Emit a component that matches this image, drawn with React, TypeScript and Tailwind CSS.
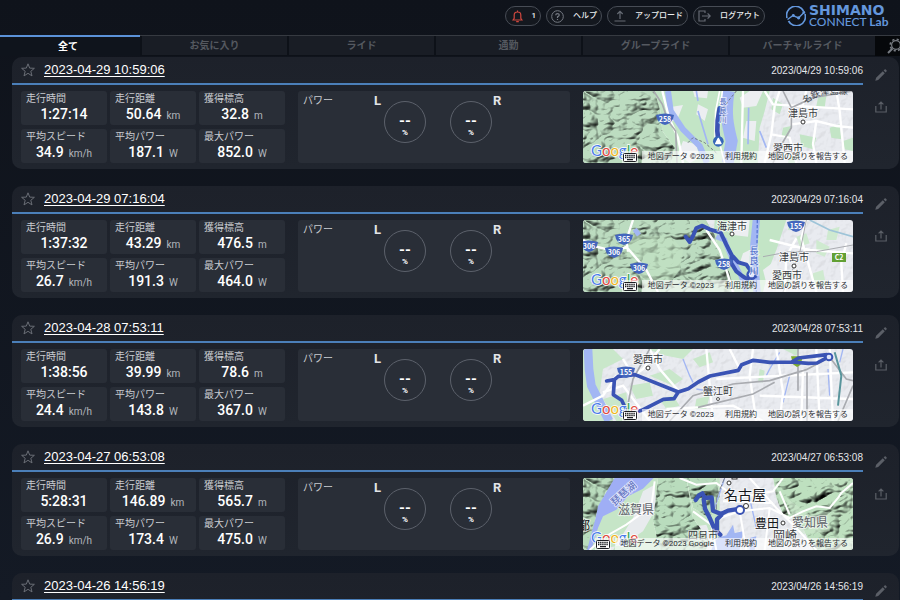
import React from "react";
import type { ReactNode } from "react";

const SANS = "font-['Liberation_Sans','Noto_Sans_CJK_JP',sans-serif]";
const ROBOTO = "font-['Roboto','Noto_Sans_CJK_JP',sans-serif]";

type Label = { x: number; y: number; text: string; size?: number; color?: string; rotate?: number };
type MapData = {
  name: string;
  shapes: ReactNode;
  labels: Label[];
  shields: [number, number, string][];
  extra?: ReactNode;
  wideCredit?: boolean;
};
type Stats = { time: string; distance: string; climb: string; speed: string; power: string; maxPower: string };
type Activity = { title: string; date: string; stats?: Stats; map?: MapData };

const ROUTE = { fill: "none", stroke: "#3a53b4", strokeWidth: 12, strokeLinejoin: "round", strokeLinecap: "round" } as const;
const WATER = { fill: "none", stroke: "#a2b6f3" } as const;
const ROAD = { fill: "none", stroke: "#ffffff", strokeWidth: 7 } as const;
const RAIL = { fill: "none", stroke: "#a9abb0", strokeWidth: 5 } as const;
const GREEN = "#c3e5c6";

function MapBase() {
  return <rect width="810" height="216" fill="#e9ebf0" filter="url(#relief-soft)" />;
}

const map1: MapData = {
  name: "津島市周辺",
  shapes: (
    <>
      <MapBase />
      <path d="M200 0H560L545 60 530 110 525 216H230Z" fill={GREEN} />
      <path d="M250 50 300 42 285 80 262 95ZM330 0 375 0 372 22 335 18ZM345 40 375 55 365 90 340 70ZM300 150 340 160 350 200 320 216 285 190ZM470 20 500 0 540 0 520 45 480 50ZM490 90 520 90 515 150 480 140Z" fill="#eceef1" />
      <path d="M570 20 600 40 590 70 565 55ZM650 130 700 140 690 175 655 165ZM620 195 650 190 640 216H615ZM740 110 770 100 775 145 745 140ZM705 20 730 15 725 50 700 45ZM780 150 810 140V180L785 175ZM600 110 625 105 615 140 595 140Z" fill={GREEN} />
      <path d="M0 0H215L232 60 238 120 275 170 265 216H0Z" fill="#bcdcc0" filter="url(#relief)" />
      <path d="M255 0 263 60 300 115 350 165 372 216" {...WATER} strokeWidth="18" />
      <path d="M345 60 360 110 375 160M340 0 345 30M497 50 495 160M530 120 550 170" {...WATER} strokeWidth="5" />
      <path d="M437 0C425 70 436 110 446 150L434 216" {...WATER} strokeWidth="36" />
      <path d="M418 0 410 70 408 150 425 216M410 0 398 60 396 140" {...ROAD} strokeWidth="5" />
      <path d="M238 0 258 80 285 140 300 216M480 0 475 216M545 0 570 40 810 55M575 45 565 130 545 216M590 0 575 45M620 60 625 100 700 90 760 105 810 110M670 0 655 60M760 0 770 60 785 216M700 90 690 160 700 216M565 130 620 140 640 216" {...ROAD} />
      <path d="M212 0 238 40 255 90 278 120 282 216M600 0 625 50 625 110 590 170 570 216M625 50 690 20 810 0" {...RAIL} />
      <path d="M315 155 330 140 365 155 405 190M460 0 420 50 425 100" fill="none" stroke="#6e7480" strokeWidth="3" strokeDasharray="8 6" />
      <path d="M410 52 404 88 403 120 406 150" {...ROUTE} strokeWidth="14" />
      <circle cx="406" cy="151" r="16" fill="#3566b8" />
      <path d="M406 142 414 158H398Z" fill="#fff" stroke="#fff" strokeWidth="4" strokeLinejoin="round" />
    </>
  ),
  labels: [
    { x: 220, y: 26, text: "津島市" },
    { x: 205, y: 61, text: "愛西市" },
    { x: 140, y: 13, text: "長", size: 7, color: "#4f6ac0" },
    { x: 140, y: 22, text: "良", size: 7, color: "#4f6ac0" },
    { x: 140, y: 31, text: "川", size: 7, color: "#4f6ac0" },
  ],
  shields: [[82, 28, "258"]],
  extra: (
    <>
      <circle cx="220" cy="31" r="2" fill="#fff" stroke="#333" />
      <path id="rail-name" d="M222 13Q236 3 248 3T272 3" fill="none" />
      <text fontSize="9" fill="#42464d">
        <textPath href="#rail-name">名鉄津島線</textPath>
      </text>
    </>
  ),
};

const map2: MapData = {
  name: "海津市周辺",
  shapes: (
    <>
      <MapBase />
      <path d="M395 0H610L580 90 560 140 540 216H380Z" fill={GREEN} />
      <path d="M440 0 500 0 495 50 450 45ZM480 100 500 90 500 140 470 130ZM540 150 580 120 590 180 550 190Z" fill="#eceef1" />
      <path d="M640 50 670 40 680 70 650 80ZM735 30 770 20 760 60 730 60ZM590 150 630 160 620 200H590ZM700 60 740 80 725 110 700 100ZM690 160 720 150 730 200H690ZM620 0H650L640 30H615Z" fill="#cfead0" />
      <path d="M0 0H370L395 45 410 95 440 160 455 216H0Z" fill="#bcdcc0" filter="url(#relief)" />
      <path d="M130 30 180 50 260 45 300 90 290 150 240 216H190L150 120 120 95Z" fill="#c2e3c3" opacity=".55" />
      <path d="M155 28 168 45M400 50 425 60 440 100 475 170 490 216" {...WATER} strokeWidth="15" />
      <path d="M520 0 512 80 522 216" {...WATER} strokeWidth="22" />
      <path d="M523 0 520 216" fill="none" stroke="#5877d4" strokeWidth="4" strokeDasharray="10 5" />
      <path d="M0 60 40 80 100 95 130 80 190 150 225 216M135 95 130 60 150 0M370 30 410 90 430 150 450 216M640 55 610 110 605 216M790 70 775 130 780 216M560 60 680 90 810 100M670 0 655 55 700 216" {...ROAD} />
      <path d="M540 110 620 95 700 95 810 75M600 216 650 100 670 0" {...RAIL} strokeWidth="3" />
      <path d="M680 0 740 30 810 50" fill="none" stroke="#9ec4d8" strokeWidth="5" />
      <path d="M308 50 320 66 330 48 340 24 358 17 380 28 413 38 430 74 446 105 466 127 490 134 505 155M446 108 444 128 460 154 478 168 494 178" {...ROUTE} />
      <circle cx="506" cy="164" r="12" fill="#dfe6fa" stroke="#3a53b4" strokeWidth="8" />
    </>
  ),
  labels: [
    { x: 149, y: 10, text: "海津市" },
    { x: 211, y: 41, text: "津島市" },
    { x: 204, y: 59, text: "愛西市" },
    { x: 171, y: 34, text: "長", size: 9, color: "#3f62c4" },
    { x: 171, y: 44, text: "良", size: 9, color: "#3f62c4" },
    { x: 171, y: 54, text: "川", size: 9, color: "#3f62c4" },
  ],
  shields: [[6, 26, "306"], [41, 19, "365"], [31, 32, "306"], [56, 48, "306"], [141, 44, "258"], [213, 6, "155"]],
  extra: (
    <>
      <circle cx="149" cy="14" r="2" fill="#fff" stroke="#333" />
      <circle cx="211" cy="46" r="2" fill="#fff" stroke="#333" />
      <rect x="249" y="33" width="14" height="9" fill="#62a034" />
      <text x="256" y="40" textAnchor="middle" fontSize="7" fontWeight="700" fill="#fff">C2</text>
    </>
  ),
};

const map3: MapData = {
  name: "蟹江町周辺",
  shapes: (
    <>
      <MapBase />
      <path d="M0 0H90L120 30 60 60 50 130 90 216H0ZM190 0H330L300 30 250 20ZM200 80 260 60 300 90 270 110ZM230 150 270 140 290 170 250 180ZM330 30 380 10 390 40 350 55ZM140 110 200 100 210 140 160 150ZM340 150 380 140 370 180H335ZM600 0 650 0 640 20ZM530 60 545 65 540 100H525ZM60 150 130 130 140 216H100Z" fill="#c9e7ca" />
      <path d="M15 0 18 60 25 110 45 150 78 216" {...WATER} strokeWidth="26" />
      <path d="M300 30 320 80 330 100M590 10 560 60 550 80M340 120 400 130M620 80 600 160M735 60 740 140M780 0 770 40" {...WATER} strokeWidth="4" />
      <path d="M120 30 150 80 180 60 230 0M60 130 120 110 200 216M200 0 230 60 290 130M370 0 390 216M510 0 500 80 520 216M580 0 600 130 590 216M700 0 710 216M400 90 810 70M530 140 810 150M250 180 450 170 540 216M440 0 470 60M660 60 655 216M740 0 750 216M0 170 60 140 100 80" {...ROAD} />
      <path d="M200 0 150 90 125 216M260 216 330 140 450 105 560 95 670 62 740 25M345 175 510 135 575 100M645 0V125M672 70V216M740 25 790 90 810 95M765 216 810 110" {...RAIL} />
      <path d="M755 10 775 80 765 170" fill="none" stroke="#59959c" strokeWidth="6" />
      <path d="M624 22H660L652 48 642 54 630 46Z" fill="#7dac2b" />
      <path d="M71 96 94 92 106 82 156 77 286 129 273 149 241 151 176 184 136 196 116 154 91 137 94 94M286 129 316 119 346 99 381 81 466 64 476 47 511 34 560 40 626 39 646 27 732 17M626 39 676 43 702 42 728 28" {...ROUTE} strokeWidth="11" />
      <circle cx="738" cy="24" r="10" fill="#dfe6fa" stroke="#3a53b4" strokeWidth="6" />
    </>
  ),
  labels: [
    { x: 65, y: 14, text: "愛西市" },
    { x: 135, y: 46, text: "蟹江町" },
  ],
  shields: [[43, 23, "155"]],
  extra: (
    <>
      <circle cx="65" cy="19" r="2" fill="#fff" stroke="#333" />
      <circle cx="135" cy="50" r="1.5" fill="#fff" stroke="#555" />
    </>
  ),
};

const map4: MapData = {
  name: "名古屋周辺",
  wideCredit: true,
  shapes: (
    <>
      <MapBase />
      <rect width="410" height="216" fill="#c6e5c7" />
      <path d="M180 40 215 20 220 90 180 160 120 200 40 216H90L150 120ZM300 150 370 140 400 216H300Z" fill="#e8ebee" />
      <path d="M0 0H110L70 40 40 110 20 216H0ZM225 0H310L320 60 330 120 380 190 370 216H230L210 130ZM310 0H400L410 60 380 120 330 90Z" fill="#b9dcbd" filter="url(#relief)" />
      <path d="M570 0H810V216H690L650 130 600 110 580 60Z" fill="#bee0bf" filter="url(#relief)" />
      <path d="M610 60 680 110 740 100 740 160 650 170Z" fill="#cde8cd" opacity=".6" />
      <path d="M95 0H212L180 32 135 55 100 95 60 115 45 150 25 216H12L38 120 45 85Z" fill="#9faef5" />
      <path d="M385 216 400 180 430 172 450 140 455 165 480 160 470 216ZM500 180 520 175 515 216H500Z" fill="#a2b6f3" />
      <path d="M395 90 425 0M500 60 520 150" {...WATER} strokeWidth="4" />
      <path d="M215 10 205 85 130 140 60 180 20 216M290 0 340 20 400 15 460 60 570 40 600 0M330 100 385 140 400 216M410 120 470 100 560 90 620 120 660 100 700 85 740 90 765 60 775 45 810 15M470 100 490 216M560 90 545 216M500 0 580 90 640 150 700 216M420 70 570 75M590 40 620 110" {...ROAD} strokeWidth="6" />
      <path d="M425 0 400 60 400 100" fill="none" stroke="#7b828c" strokeWidth="3" strokeDasharray="16 5" />
      <path d="M338 66 348 52 358 46 366 60 386 58 390 98 414 108 435 98 458 94M362 64 366 92 382 124 394 152 412 170M402 164 402 124 416 110" {...ROUTE} strokeWidth="13" />
      <circle cx="471" cy="96" r="12" fill="#fff" stroke="#3a53b4" strokeWidth="6" />
    </>
  ),
  labels: [
    { x: 43, y: 18, text: "琵琶湖", color: "#5466b8", rotate: -42 },
    { x: 53, y: 36, text: "滋賀県", size: 12, color: "#5d6168" },
    { x: 162, y: 22, text: "名古屋", size: 14, color: "#15171b" },
    { x: 184, y: 50, text: "豊田", size: 12, color: "#15171b" },
    { x: 227, y: 49, text: "愛知県", size: 12, color: "#5d6168" },
    { x: 120, y: 61, text: "四日市" },
    { x: 202, y: 62, text: "岡崎", size: 12 },
    { x: 1, y: 52, text: "都", size: 12, color: "#15171b" },
  ],
  shields: [],
  extra: (
    <>
      <circle cx="163" cy="28" r="2.5" fill="#fff" stroke="#333" />
      <circle cx="146" cy="5" r="2" fill="#fff" stroke="#333" />
      <circle cx="200" cy="45" r="2" fill="#fff" stroke="#333" />
      <rect x="149" y="-3" width="5" height="4" fill="#fff" stroke="#333" />
    </>
  ),
};

const activities: Activity[] = [
  { title: "2023-04-29 10:59:06", date: "2023/04/29 10:59:06", map: map1, stats: { time: "1:27:14", distance: "50.64", climb: "32.8", speed: "34.9", power: "187.1", maxPower: "852.0" } },
  { title: "2023-04-29 07:16:04", date: "2023/04/29 07:16:04", map: map2, stats: { time: "1:37:32", distance: "43.29", climb: "476.5", speed: "26.7", power: "191.3", maxPower: "464.0" } },
  { title: "2023-04-28 07:53:11", date: "2023/04/28 07:53:11", map: map3, stats: { time: "1:38:56", distance: "39.99", climb: "78.6", speed: "24.4", power: "143.8", maxPower: "367.0" } },
  { title: "2023-04-27 06:53:08", date: "2023/04/27 06:53:08", map: map4, stats: { time: "5:28:31", distance: "146.89", climb: "565.7", speed: "26.9", power: "173.4", maxPower: "475.0" } },
  { title: "2023-04-26 14:56:19", date: "2023/04/26 14:56:19" },
];

/* Shaded-relief filters shared by every map thumbnail. */
function ReliefFilters() {
  return (
    <svg width="0" height="0" className="absolute" aria-hidden="true">
      <filter id="relief" x="0" y="0" width="1" height="1" colorInterpolationFilters="sRGB">
        <feTurbulence type="turbulence" baseFrequency="0.011 0.017" numOctaves={3} seed={7} result="noise" />
        <feDiffuseLighting in="noise" surfaceScale={16} diffuseConstant={1.28} lightingColor="#ffffff" result="light">
          <feDistantLight azimuth={225} elevation={54} />
        </feDiffuseLighting>
        <feBlend in="light" in2="SourceGraphic" mode="multiply" result="shade" />
        <feComposite in="shade" in2="SourceGraphic" operator="in" />
      </filter>
      <filter id="relief-soft" x="0" y="0" width="1" height="1" colorInterpolationFilters="sRGB">
        <feTurbulence type="fractalNoise" baseFrequency="0.06" numOctaves={2} seed={3} result="noise" />
        <feDiffuseLighting in="noise" surfaceScale={1} diffuseConstant={1.1} lightingColor="#ffffff" result="light">
          <feDistantLight azimuth={225} elevation={65} />
        </feDiffuseLighting>
        <feBlend in="light" in2="SourceGraphic" mode="multiply" result="shade" />
        <feComposite in="shade" in2="SourceGraphic" operator="in" />
      </filter>
    </svg>
  );
}

function KeyboardIcon() {
  return (
    <svg width="14" height="9" viewBox="0 0 14 9" aria-hidden="true">
      <rect x=".5" y=".5" width="13" height="8" rx="1" fill="#fff" stroke="#1c1e22" />
      <path d="M2 2.5H12M2 4.5H12" stroke="#1c1e22" strokeWidth="1.4" strokeDasharray="1.4 .7" />
      <path d="M4 6.7H10" stroke="#1c1e22" strokeWidth="1.2" />
    </svg>
  );
}

function MapThumb({ map }: { map: MapData }) {
  return (
    <div className="relative h-[72px] w-[270px] shrink-0 overflow-hidden rounded-[3px]">
      <svg width="270" height="72" role="img" aria-label={map.name} className="block font-['Noto_Sans_CJK_JP',sans-serif]">
        <g transform="scale(.33333)">{map.shapes}</g>
        {map.shields.map(([x, y, n], i) => (
          <g key={i}>
            <path d={`M${x - 9} ${y - 4}Q${x} ${y - 7} ${x + 9} ${y - 4}Q${x + 8} ${y + 4} ${x} ${y + 6}Q${x - 8} ${y + 4} ${x - 9} ${y - 4}Z`} fill="#4466bd" />
            <text x={x} y={y + 3} textAnchor="middle" fontSize="7" fontWeight="700" fill="#fff">{n}</text>
          </g>
        ))}
        {map.labels.map((l, i) => (
          <text
            key={i}
            x={l.x}
            y={l.y}
            textAnchor="middle"
            fontSize={l.size ?? 10}
            fill={l.color ?? "#3a3d43"}
            stroke="#ffffff"
            strokeOpacity=".6"
            strokeWidth="2"
            paintOrder="stroke"
            transform={l.rotate ? `rotate(${l.rotate} ${l.x} ${l.y})` : undefined}
          >
            {l.text}
          </text>
        ))}
        {map.extra}
        <text x="8" y="65" fontSize="15" stroke="#fff" strokeWidth="1.5" paintOrder="stroke" className="font-['Lato',sans-serif]">
          <tspan fill="#4a7de8">G</tspan>
          <tspan fill="#e0483c">o</tspan>
          <tspan fill="#efb51c">o</tspan>
          <tspan fill="#4a7de8">g</tspan>
          <tspan fill="#35a455">l</tspan>
          <tspan fill="#e0483c">e</tspan>
        </text>
      </svg>
      <div className={`absolute right-0 bottom-0 flex h-3 items-center justify-end text-[8px] leading-3 whitespace-nowrap text-[#2c2e33] ${ROBOTO}`}>
        <button type="button" aria-label="キーボード ショートカット" className="mr-1 flex h-3 w-4 items-center justify-center bg-white/60">
          <KeyboardIcon />
        </button>
        <span className="bg-white/60 pr-[5px] pl-[6px]">{map.wideCredit ? "地図データ ©2023 Google" : "地図データ ©2023"}</span>
        <a href="#terms" className="bg-white/60 pr-[5px] pl-[6px]">利用規約</a>
        <a href="#report" className="bg-white/60 pr-[5px] pl-[6px]">地図の誤りを報告する</a>
      </div>
    </div>
  );
}

function Stat({ label, value, unit }: { label: string; value: string; unit?: string }) {
  return (
    <div className="flex h-[34px] w-[86px] flex-col rounded-[3px] bg-[#292e37] px-[5px] pt-px">
      <dt className="text-[10px] leading-[14px] text-[#c9ccd1]">{label}</dt>
      <dd className="text-center text-[14px] leading-[17px] font-medium text-white">
        {value}
        {unit && <span className="ml-[5px] text-[10px] font-normal text-[#b3b7bd]">{unit}</span>}
      </dd>
    </div>
  );
}

function Dial() {
  return (
    <div className="flex h-[42px] w-[42px] flex-col items-center rounded-full border border-[#5c616b] pt-3">
      <span className="text-[15px] leading-[15px] font-bold text-white">--</span>
      <span className="text-[8px] leading-[8px] font-bold text-white">%</span>
    </div>
  );
}

function ActivityCard({ activity }: { activity: Activity }) {
  const { stats: s, map } = activity;
  return (
    <article className={`flex h-28 shrink-0 rounded-[10px] bg-linear-to-b from-[#1d212a] to-[#20252e] ${ROBOTO}`}>
      <div className="min-w-0 flex-1">
        <header className="flex h-7 items-center border-b-2 border-[#4b7fb9] pl-[9px]">
          <button type="button" aria-label="お気に入り" className="mr-[9px]">
            <svg width="14" height="14" viewBox="0 0 14 14" fill="none" stroke="#6a6e76" strokeLinejoin="round" className="block">
              <path d="M7 .8 8.7 5.1 13.4 5.3 9.8 8.3 11 12.9 7 10.3 3 12.9 4.2 8.3.6 5.3 5.3 5.1Z" />
            </svg>
          </button>
          <a href="#activity" className={`text-[13px] text-white underline underline-offset-2 ${SANS}`}>{activity.title}</a>
          <time className={`ml-auto text-[10px] text-[#e4e6e9] ${SANS}`}>{activity.date}</time>
        </header>
        {s && map && (
          <div className="flex pt-[6px] pr-[10px] pl-[9px]">
            <dl className="grid grid-cols-3 gap-x-[3px] gap-y-1">
              <Stat label="走行時間" value={s.time} />
              <Stat label="走行距離" value={s.distance} unit="km" />
              <Stat label="獲得標高" value={s.climb} unit="m" />
              <Stat label="平均スピード" value={s.speed} unit="km/h" />
              <Stat label="平均パワー" value={s.power} unit="W" />
              <Stat label="最大パワー" value={s.maxPower} unit="W" />
            </dl>
            <div className="mr-[13px] ml-[13px] flex h-[72px] flex-1 rounded-[3px] bg-[#292e37] px-[5px] pt-[3px]">
              <span className="w-[71px] text-[10px] leading-[14px] text-[#c9ccd1]">パワー</span>
              <div className="flex text-[13px] leading-[14px] font-bold text-[#e2e4e7]">
                <span className="w-[10px]">L</span>
                <div className="flex gap-6 pt-[7px]">
                  <Dial />
                  <Dial />
                </div>
                <span className="pl-px">R</span>
              </div>
            </div>
            <MapThumb map={map} />
          </div>
        )}
      </div>
      <div className="flex w-9 flex-col items-center gap-5 pt-3">
        <button type="button" aria-label="編集">
          <svg width="12" height="12" viewBox="0 0 12 12" fill="#5b5f67" className="block">
            <path d="M.3 11.7 1.1 8.7 7.8 2.3 9.8 4.3 3.2 10.9ZM8.6 1.5 9.6.5Q10.2 0 10.8.5L11.5 1.2Q12 1.8 11.5 2.4L10.6 3.4Z" />
          </svg>
        </button>
        <button type="button" aria-label="共有">
          <svg width="12" height="12" viewBox="0 0 12 12" fill="none" stroke="#5b5f67" strokeWidth="1.2" className="block">
            <path d="M.8 5V11H11.2V5M6 8.4V1.2M3.6 3.4 6 1 8.4 3.4" />
          </svg>
        </button>
      </div>
    </article>
  );
}

function PillButton({ icon, label, className }: { icon: ReactNode; label: string; className: string }) {
  return (
    <button type="button" className={`flex h-5 items-center justify-between rounded-full border border-[#474c55] bg-[#14181f] text-[8px] leading-none font-medium text-[#eceef0] ${className}`}>
      {icon}
      <span>{label}</span>
    </button>
  );
}

function Logo() {
  return (
    <a href="#home" aria-label="SHIMANO CONNECT Lab" className="flex shrink-0 items-center gap-[3px] text-[#6497dc]">
      <svg width="20" height="20" viewBox="0 0 20 20" fill="none" stroke="#6497dc" strokeWidth="1.7">
        <path d="M1 12A9 9 0 0 1 17.5 5M19 8A9 9 0 0 1 2.5 15" />
        <path d="M1.5 13.5 7 9.5 12.5 12 18.5 6" strokeWidth="1.4" />
        <circle cx="7.3" cy="9.5" r="1.4" fill="#6497dc" stroke="none" />
        <circle cx="12.6" cy="11.8" r="1.6" fill="#6497dc" stroke="none" />
        <circle cx="17.8" cy="6.5" r="1.4" fill="#6497dc" stroke="none" />
      </svg>
      <span className="flex w-[87px] flex-col whitespace-nowrap">
        <span className="font-['DejaVu_Sans',sans-serif] text-[14px] leading-[12px] font-bold">SHIMANO</span>
        <span className="font-['Lato',sans-serif] text-[12px] leading-[12px] font-medium">
          CONNECT <b>Lab</b>
        </span>
      </span>
    </a>
  );
}

const otherTabs = ["お気に入り", "ライド", "通勤", "グループライド", "バーチャルライド"];

export default function App() {
  return (
    <div className={`flex h-screen flex-col overflow-hidden bg-linear-to-b from-[#0f131b] to-[#141a25] ${ROBOTO}`}>
      <ReliefFilters />
      <header className="flex h-[35px] shrink-0 items-center justify-end gap-[5px] pr-1 pb-[3px]">
        <PillButton
          className="w-9 pr-1 pl-[6px]"
          label="1"
          icon={
            <svg width="11" height="13" viewBox="0 0 11 13" fill="none" stroke="#d1483f" strokeWidth="1.2">
              <path d="M1 10H10L8.8 8.3V5Q8.8 2 5.5 2T2.2 5V8.3ZM4.2 11.6H6.8M5.5 2V.6" />
            </svg>
          }
        />
        <PillButton
          className="w-14 pr-1 pl-1"
          label="ヘルプ"
          icon={
            <svg width="13" height="13" viewBox="0 0 13 13" fill="none" stroke="#757a83">
              <circle cx="6.5" cy="6.5" r="5.8" />
              <path d="M4.7 5.2Q4.8 3.6 6.5 3.6T8.3 5.1Q8.3 6.1 6.5 6.9V8M6.5 8.9V10" strokeWidth="1.2" />
            </svg>
          }
        />
        <PillButton
          className="w-[81px] pr-1 pl-[6px]"
          label="アップロード"
          icon={
            <svg width="12" height="12" viewBox="0 0 12 12" fill="none" stroke="#666b74">
              <path d="M.5 11H11.5M6 9V1.4M3.3 4 6 1.3 8.7 4" strokeWidth="1.2" />
            </svg>
          }
        />
        <PillButton
          className="w-[72px] pr-1 pl-1"
          label="ログアウト"
          icon={
            <svg width="13" height="12" viewBox="0 0 13 12" fill="none" stroke="#666b74" strokeWidth="1.2">
              <path d="M7 3V1H1V11H7V9M4 6H12M9.6 3.4 12.2 6 9.6 8.6" />
            </svg>
          }
        />
        <div className="ml-4">
          <Logo />
        </div>
      </header>
      <nav className="flex h-[21px] shrink-0 gap-[2px] border-t border-[#363a41] bg-[#0d1118] text-[10px] font-bold">
        <button type="button" className="-mt-px w-[140px] border-t-2 border-[#5b92d8] bg-[#0f141c] pr-1 text-white">全て</button>
        {otherTabs.map((t) => (
          <button key={t} type="button" className="mb-px flex-1 bg-[#191d25] text-[#555960]">{t}</button>
        ))}
        <button type="button" aria-label="検索設定" className="-ml-[2px] w-[25px] shrink-0 overflow-hidden bg-[#06080b] pl-3">
          <svg width="18" height="16" viewBox="0 0 18 16" fill="none" stroke="#777b82" className="block max-w-none">
            <circle cx="9" cy="7" r="4.4" strokeWidth="1.2" />
            <circle cx="9" cy="7" r="5.8" strokeWidth="1.6" strokeDasharray="2.2 2.35" />
            <path d="M5.5 10.5 1 15" strokeWidth="2" />
          </svg>
        </button>
      </nav>
      <main className="flex min-h-0 flex-1 flex-col gap-[17px] overflow-hidden pt-px pr-px pl-3">
        {activities.map((a) => (
          <ActivityCard key={a.title} activity={a} />
        ))}
      </main>
    </div>
  );
}
